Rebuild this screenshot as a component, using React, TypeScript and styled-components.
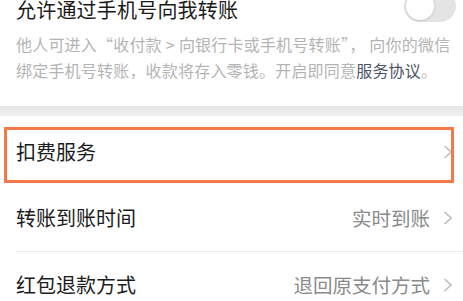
import React from 'react';
import styled, { createGlobalStyle } from 'styled-components';

const GlobalStyle = createGlobalStyle`
  html, body {
    margin: 0;
    padding: 0;
    background: #ffffff;
    overflow: hidden;
  }
  body {
    font-family: "Noto Sans CJK SC", "Noto Sans", sans-serif;
  }
`;

const Page = styled.div`
  width: 463px;
  height: 301px;
  overflow: hidden;
  background: #fff;
`;

const TopSection = styled.div`
  padding: 0 7px 0 16px;
`;

const TitleRow = styled.div`
  display: flex;
  align-items: flex-end;
  justify-content: space-between;
  height: 32px;
  margin-top: -10px;
`;

const Title = styled.div`
  font-size: 20px;
  line-height: 24px;
  color: #1a1a1a;
  letter-spacing: 0.2px;
`;

const Toggle = styled.div<{ on?: boolean }>`
  position: relative;
  width: 52px;
  height: 32px;
  border-radius: 16px;
  background: ${(p) => (p.on ? '#07c160' : '#e4e4e4')};
  flex-shrink: 0;
`;

const Knob = styled.div`
  position: absolute;
  top: 2px;
  left: 2px;
  width: 28px;
  height: 28px;
  border-radius: 50%;
  background: #fff;
  box-shadow: 0 1px 3px rgba(0, 0, 0, 0.15);
`;

const Desc = styled.div`
  margin-top: 9px;
  font-size: 16px;
  line-height: 26px;
  color: #b4b4b4;
  letter-spacing: 0.2px;
`;

const DescLine = styled.span`
  display: block;
  white-space: nowrap;
`;

const Quote = styled.span`
  font-feature-settings: 'fwid' 1;
`;

const Gap = styled.span<{ w: number }>`
  display: inline-block;
  width: ${(p) => p.w}px;
`;

const Link = styled.span`
  color: #4d5366;
`;

const Band = styled.div`
  margin-top: 23px;
  height: 10px;
  background: linear-gradient(#e6e6e6, #efefef);
`;

const List = styled.div`
  padding-top: 3px;
`;

const Row = styled.div<{ highlighted?: boolean; divider?: boolean }>`
  position: relative;
  display: flex;
  align-items: center;
  justify-content: space-between;
  height: 66px;
  padding: 0 10px 0 16px;
  box-sizing: border-box;

  ${(p) =>
    p.divider &&
    `
    &::before {
      content: '';
      position: absolute;
      left: 16px;
      right: 0;
      bottom: -1px;
      height: 1px;
      background: #ececec;
    }
  `}

  ${(p) =>
    p.highlighted &&
    `
    &::after {
      content: '';
      position: absolute;
      left: 4px;
      right: 9px;
      top: 8px;
      bottom: 2px;
      border: 3.5px solid #f4794a;
      box-sizing: border-box;
    }
  `}
`;

const Divider = styled.div`
  height: 1px;
`;

const Label = styled.div`
  font-size: 20px;
  line-height: 24px;
  color: #1c1c1c;
`;

const Right = styled.div`
  display: flex;
  align-items: center;
  gap: 13px;
`;

const Value = styled.div`
  font-size: 19.5px;
  line-height: 24px;
  color: #8a8a8a;
`;

const Chevron = () => (
  <svg width="10" height="14" viewBox="0 0 10 14">
    <polyline
      points="1.5,1 8.2,7 1.5,13"
      fill="none"
      stroke="#b9b9b9"
      strokeWidth="1.4"
      strokeLinejoin="miter"
    />
  </svg>
);

const rows = [
  { label: '扣费服务', highlighted: true },
  { label: '转账到账时间', value: '实时到账', divider: true },
  { label: '红包退款方式', value: '退回原支付方式' },
];

const App: React.FC = () => {
  return (
    <Page>
      <GlobalStyle />
      <TopSection>
        <TitleRow>
          <Title>允许通过手机号向我转账</Title>
          <Toggle>
            <Knob />
          </Toggle>
        </TitleRow>
        <Desc>
          <DescLine>
            他人可进入<Quote>“</Quote>收付款<Gap w={4} />&gt;<Gap w={4} />向银行卡或手机号转账
            <Quote>”</Quote>，<Gap w={4} />向你的微信
          </DescLine>
          <DescLine>
            绑定手机号转账，收款将存入零钱。开启即同意<Link>服务协议</Link>。
          </DescLine>
        </Desc>
      </TopSection>
      <Band />
      <List>
        {rows.map((r, i) => (
          <React.Fragment key={r.label}>
            <Row highlighted={r.highlighted} divider={r.divider}>
              <Label>{r.label}</Label>
              <Right>
                {r.value && <Value>{r.value}</Value>}
                <Chevron />
              </Right>
            </Row>
            {r.divider && i < rows.length - 1 && <Divider />}
          </React.Fragment>
        ))}
      </List>
    </Page>
  );
};

export default App;
